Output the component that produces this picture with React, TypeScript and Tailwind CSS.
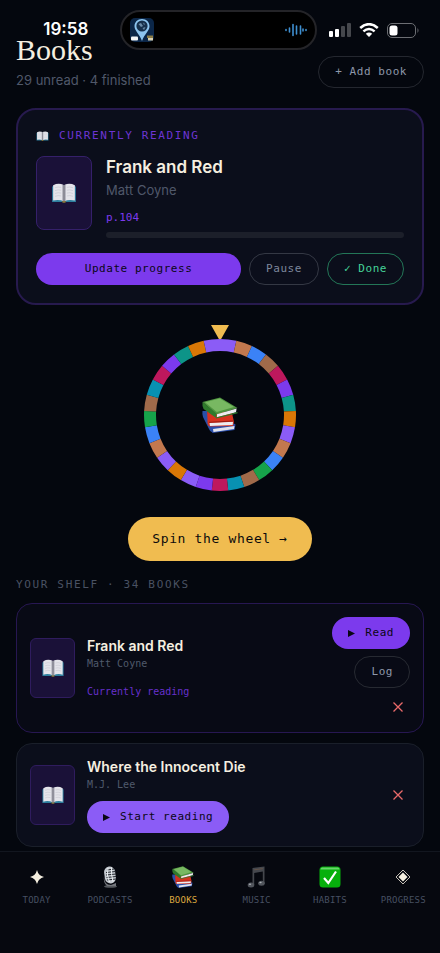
import React from "react";

const mono = "font-['DejaVu_Sans_Mono','Liberation_Mono',monospace]";

/* Open book drawing, used as the cover placeholder */
function OpenBook({ className }: { className: string }) {
  return (
    <svg viewBox="0 0 26 21" className={className} aria-hidden="true">
      <path d="M0.5 4 L2 3 L24 3 L25.5 4 V20 H15 Q13 21.5 11 20 H0.5 Z" fill="#2e7f9e" />
      <path d="M11 19 H15 L14.4 20.8 H11.6 Z" fill="#8a6a22" />
      <path d="M1.6 2.4 Q7 -0.4 12.6 2 V19 Q7 16.8 1.6 18.4 Z" fill="#e4e4ea" />
      <path d="M24.4 2.4 Q19 -0.4 13.4 2 V19 Q19 16.8 24.4 18.4 Z" fill="#e4e4ea" />
      <path d="M11.2 1.5 L13 2.4 L14.8 1.5 V18.4 L13 19.3 L11.2 18.4 Z" fill="#a9a9b4" />
      <path d="M13 2 V19" stroke="#55555f" strokeWidth="0.7" />
      <path
        d="M3.6 5 Q7 3.6 10 4.6 M3.6 8 Q7 6.6 10 7.6 M3.6 11 Q7 9.6 10 10.6 M3.6 14 Q7 12.6 10 13.6 M16 4.6 Q19 3.6 22.4 5 M16 7.6 Q19 6.6 22.4 8 M16 10.6 Q19 9.6 22.4 11 M16 13.6 Q19 12.6 22.4 14"
        fill="none"
        stroke="#c2c2cc"
        strokeWidth="0.6"
      />
    </svg>
  );
}

/* Stack of three books */
function BookStack({ className }: { className: string }) {
  return (
    <svg viewBox="0 0 36 36" className={className} aria-hidden="true">
      <path d="M0.5 14 L5 14 L10 30 L10.500 35.500 Q8 35 7 32 L1 20 Q0 17 0.500 14 Z" fill="#2a4fa8" />
      <path d="M8 29 L31 26 L33.500 27.500 L32.500 33 L10.500 36 Z" fill="#2b4eaa" />
      <path d="M11 32 L32.500 29 L32 32 L11.500 35 Z" fill="#dfe2ec" />
      <path d="M5 13 L30 16 L32 25 L31 29 L7.500 29.500 Q5 28 5.500 23 Z" fill="#d7321f" />
      <path d="M7.500 26 L31 24.800 L30.600 28 L8 29 Z" fill="#ececf0" />
      <path d="M7 25.300 L31.600 24" stroke="#8f1a12" strokeWidth="0.900" />
      <path d="M0.500 5 L18 0.500 L35.500 11 L14.500 17.500 Z" fill="#4f9440" />
      <path d="M3 5.200 L17.800 1.400 L32 10 L14.800 15 Z" fill="#78b862" />
      <path d="M0.500 5 L14.500 16.500 L14.200 21 L1.600 12 Q0 8.500 0.500 5 Z" fill="#2f7a2c" />
      <path d="M15 17.200 L34.600 11.400 L34 15.200 L15 20.200 Z" fill="#ececf0" />
      <path d="M14 21 L35.500 15.600" stroke="#2f7a2c" strokeWidth="1.200" />
    </svg>
  );
}

function Cover({ large = false }: { large?: boolean }) {
  return (
    <div
      className={
        large
          ? "flex h-[74px] w-14 shrink-0 items-center justify-center rounded-lg border border-[#35206a] bg-[#1a1138]"
          : "flex h-[60px] w-[45px] shrink-0 items-center justify-center rounded-md border border-[#2f1c5e] bg-[#1a1138]"
      }
    >
      <OpenBook className={large ? "h-5 w-[26px]" : "h-[18px] w-[22px]"} />
    </div>
  );
}

const segments = [
  "#8b5cf6", "#c2784e", "#3b82f6", "#a06a4a", "#be185d", "#7c3aed", "#0d9488", "#d97706",
  "#8b5cf6", "#c2784e", "#3b82f6", "#16a34a", "#a06a4a", "#0891b2", "#be185d", "#7c3aed",
  "#8b5cf6", "#d97706", "#8b5cf6", "#c2784e", "#3b82f6", "#16a34a", "#a06a4a", "#0891b2",
  "#be185d", "#7c3aed", "#0d9488", "#d97706", "#8b5cf6",
];

function Wheel() {
  const point = (r: number, i: number) => {
    const a = (i / segments.length) * Math.PI * 2;
    return `${76 + r * Math.sin(a)} ${76 - r * Math.cos(a)}`;
  };
  return (
    <div className="flex flex-col items-center">
      <svg viewBox="0 0 18 14" className="h-3.5 w-[18px]" aria-hidden="true">
        <path d="M0 0 H18 L9 16 Z" fill="#f0bc50" />
      </svg>
      <div className="grid size-[152px] place-items-center">
        <svg viewBox="0 0 152 152" className="col-start-1 row-start-1 size-full" aria-hidden="true">
          {segments.map((color, i) => (
            <path
              key={i}
              d={`M${point(76, i)} A76 76 0 0 1 ${point(76, i + 1)} L${point(64, i + 1)} A64 64 0 0 0 ${point(64, i)} Z`}
              fill={color}
            />
          ))}
        </svg>
        <BookStack className="col-start-1 row-start-1 size-9" />
      </div>
    </div>
  );
}

function StatusBar() {
  return (
    <div className="absolute inset-x-0 top-0 z-10 flex h-[60px] items-center pr-1">
      <div className="flex flex-1 justify-center pl-3 font-['Inter',sans-serif] text-[17px] font-semibold text-white">
        19:58
      </div>
      <div className="flex h-10 w-[197px] items-center justify-between rounded-full border-2 border-[#242428] bg-black pr-2 pl-2">
        <svg viewBox="0 0 24 24" className="size-6" aria-hidden="true">
          <rect width="24" height="24" rx="5" fill="#0b2647" />
          <path d="M12 1 C7.500 1 4.500 4.200 4.500 8.300 C4.500 13 9.500 16 12 23 C14.500 16 19.500 13 19.500 8.300 C19.500 4.200 16.500 1 12 1 Z" fill="#8cc4ee" />
          <circle cx="12" cy="8" r="5.600" fill="#16304c" />
          <path d="M8.500 6 L11 5 L13 8 L11 9 Z M13 4.500 L15 6 L14 7 Z M12.500 10 L15.500 9 L14 12 Z" fill="#6b8aa6" />
          <rect x="1" y="18.500" width="7" height="4" rx="1" fill="#f2f4f6" />
          <rect x="17" y="17.500" width="6" height="2.500" fill="#8c7c46" />
          <rect x="18" y="20" width="5" height="2.500" fill="#d8d0b0" />
        </svg>
        <svg viewBox="0 0 22 14" className="h-3.5 w-[22px]" aria-hidden="true">
          <path
            d="M1 6.500 V7.500 M4.500 5 V9 M8 1.500 V12.500 M11.500 3 V11 M15.500 3 V11 M18 6 V8 M21 6.500 V7.500"
            stroke="#3f8fd0"
            strokeWidth="1.600"
            strokeLinecap="round"
          />
        </svg>
      </div>
      <div className="flex flex-1 items-center gap-2 pl-3">
        <svg viewBox="0 0 22 14" className="h-3.5 w-[22px]" aria-hidden="true">
          <rect x="0" y="8" width="4" height="6" rx="1" fill="#fff" />
          <rect x="6" y="6" width="4" height="8" rx="1" fill="#fff" />
          <rect x="12" y="3" width="4" height="11" rx="1" fill="#45474c" />
          <rect x="18" y="0" width="4" height="14" rx="1" fill="#45474c" />
        </svg>
        <svg viewBox="0 0 20 14" className="h-3.5 w-5" aria-hidden="true">
          <path d="M1.200 5 Q10 -2.600 18.800 5" fill="none" stroke="#fff" strokeWidth="2.600" />
          <path d="M4.400 8.400 Q10 3.600 15.600 8.400" fill="none" stroke="#fff" strokeWidth="2.500" />
          <path d="M10 14 L6.800 10.800 Q10 8.200 13.200 10.800 Z" fill="#fff" />
        </svg>
        <svg viewBox="0 0 33 15" className="h-[15px] w-[33px]" aria-hidden="true">
          <rect x="0.500" y="0.500" width="28" height="14" rx="4.500" fill="none" stroke="#6c6e73" />
          <rect x="2.500" y="2.500" width="8" height="10" rx="2.500" fill="#fff" />
          <path d="M30.500 5 Q32.500 7.500 30.500 10 Z" fill="#6c6e73" />
        </svg>
      </div>
    </div>
  );
}

function PlayIcon() {
  return (
    <svg viewBox="0 0 7 7" className="size-[7px]" aria-hidden="true">
      <path d="M0 0 L7 3.500 L0 7 Z" fill="currentColor" />
    </svg>
  );
}

function RemoveButton({ label }: { label: string }) {
  return (
    <button type="button" aria-label={label} className="flex h-6 w-6 items-center justify-center text-[#ea6a6a]">
      <svg viewBox="0 0 10 10" className="size-2.5" aria-hidden="true">
        <path d="M0.500 0.500 L9.500 9.500 M9.500 0.500 L0.500 9.500" stroke="currentColor" strokeWidth="1.300" />
      </svg>
    </button>
  );
}

const pill = "flex h-8 items-center justify-center rounded-full text-[11px] tracking-wider whitespace-nowrap";

function SparkIcon() {
  return (
    <svg viewBox="0 0 22 22" className="size-[22px]" aria-hidden="true">
      <path d="M11 4 Q12.300 9.700 18 11 Q12.300 12.300 11 18 Q9.700 12.300 4 11 Q9.700 9.700 11 4 Z" fill="#f5efe0" />
    </svg>
  );
}

function MicIcon() {
  return (
    <svg viewBox="0 0 22 22" className="size-[22px]" aria-hidden="true">
      <ellipse cx="11.500" cy="20.500" rx="6.500" ry="1.300" fill="#55585e" />
      <path d="M5 10 Q5 19 12 19 L17 17 V20 H8 Q4 17 5 10 Z" fill="#73767c" />
      <rect x="5.500" y="0.500" width="11" height="17" rx="5.500" fill="#c6cbd1" transform="rotate(-8 11 9)" />
      <path d="M8 4 L15 3 M7 6.500 L16.500 5.500 M7 9 L17 8 M7.500 11.500 L17 10.500 M8 14 L17 13" stroke="#24282f" strokeWidth="1.200" />
      <path d="M9 2 Q7 9 10.500 16 M12.500 1.500 Q12 9 14 15.500" stroke="#eef2f5" strokeWidth="1" fill="none" />
    </svg>
  );
}

function MusicIcon() {
  return (
    <svg viewBox="0 0 22 22" className="size-[22px]" aria-hidden="true">
      <path d="M6.500 2 L18.500 0.500 V17 H16.800 V5.500 L8.200 7 V19 H6.500 Z" fill="#44474d" />
      <path d="M8.200 3.800 L16.800 2.600" stroke="#6a5648" strokeWidth="0.800" />
      <ellipse cx="5" cy="19" rx="3.300" ry="2.500" fill="#51555c" />
      <ellipse cx="15.500" cy="17.200" rx="3.300" ry="2.500" fill="#51555c" />
      <ellipse cx="4" cy="18.300" rx="1.200" ry="0.800" fill="#a9adb3" />
      <ellipse cx="14.500" cy="16.500" rx="1.200" ry="0.800" fill="#a9adb3" />
    </svg>
  );
}

function CheckIcon() {
  return (
    <svg viewBox="0 0 22 22" className="size-[22px]" aria-hidden="true">
      <rect x="0.500" y="0.500" width="21" height="21" rx="3.500" fill="#06b00c" />
      <path d="M3 1.500 H19 Q20.500 2 20.500 3.500 H1.500 Q1.500 2 3 1.500 Z" fill="#67d66a" />
      <path d="M5 12 L9.300 17 L17 5.500" fill="none" stroke="#fff" strokeWidth="2.200" />
    </svg>
  );
}

function DiamondIcon() {
  return (
    <svg viewBox="0 0 22 22" className="size-[22px]" aria-hidden="true">
      <path d="M11 4 L18 11 L11 18 L4 11 Z" fill="none" stroke="#d9d4c8" strokeWidth="0.900" />
      <path d="M11 6.500 L15.500 11 L11 15.500 L6.500 11 Z" fill="#f5efe0" />
    </svg>
  );
}

const tabs = [
  { label: "TODAY", icon: <SparkIcon /> },
  { label: "PODCASTS", icon: <MicIcon /> },
  { label: "BOOKS", icon: <BookStack className="size-[22px]" />, active: true },
  { label: "MUSIC", icon: <MusicIcon /> },
  { label: "HABITS", icon: <CheckIcon /> },
  { label: "PROGRESS", icon: <DiamondIcon /> },
];

export default function App() {
  return (
    <div className="relative flex min-h-screen flex-col bg-[#04070e] font-['Inter',sans-serif] text-[#f5efe0]">
      <StatusBar />
      <main className="flex flex-1 flex-col px-4 pt-8 pb-1">
        <header className="flex items-end justify-between">
          <div>
            <h1 className="font-['Liberation_Serif',serif] text-[30px] leading-9">Books</h1>
            <p className="mt-0.5 mb-0.5 text-[13px] leading-5 text-[#50586a]">29 unread · 4 finished</p>
          </div>
          <button type="button" className={`${pill} ${mono} mb-1 border border-[#24272f] px-4 text-[#8e98ab]`}>
            + Add book
          </button>
        </header>

        <section className="mt-4 rounded-[20px] border-2 border-[#271a4e] bg-[#0b0e1b] p-[18px]">
          <h2 className={`${mono} flex items-center gap-2.5 text-[11px] leading-4 tracking-[0.15em] text-[#6d35d3]`}>
            <OpenBook className="h-2.5 w-[13px]" />
            CURRENTLY READING
          </h2>
          <div className="mt-3 flex gap-3.5">
            <Cover large />
            <div className="flex min-w-0 flex-1 flex-col">
              <h3 className="text-[17px] leading-[22px] font-semibold">Frank and Red</h3>
              <p className="mt-0.5 text-[13px] leading-5 text-[#50586a]">Matt Coyne</p>
              <p className={`${mono} mt-2.5 text-[11px] leading-4 text-[#7c3aed]`}>p.104</p>
              <div className="mt-1.5 h-1.5 rounded-full bg-[#1c1f2a]" />
            </div>
          </div>
          <div className="mt-[15px] flex gap-2">
            <button type="button" className={`${pill} ${mono} flex-1 bg-[#7c3aed] text-[#0a0714]`}>
              Update progress
            </button>
            <button type="button" className={`${pill} ${mono} border border-[#343844] px-4 text-[#7d879b]`}>
              Pause
            </button>
            <button type="button" className={`${pill} ${mono} border border-[#237657] px-4 text-[#45d399]`}>
              ✓ Done
            </button>
          </div>
        </section>

        <section className="mt-5 flex flex-col items-center">
          <Wheel />
          <button
            type="button"
            className={`${mono} mt-[26px] flex h-11 items-center rounded-full bg-[#f0bc50] px-6 text-[13px] tracking-wider whitespace-nowrap text-[#0c0b0c]`}
          >
            Spin the wheel →
          </button>
        </section>

        <h2 className={`${mono} mt-4 text-[11px] leading-4 tracking-[0.15em] text-[#4a5263]`}>
          YOUR SHELF · 34 BOOKS
        </h2>

        <ul className="mt-2.5 flex flex-col gap-2.5">
          <li className="flex items-center gap-3 rounded-2xl border border-[#271752] bg-[#080a15] p-[13px]">
            <Cover />
            <div className="min-w-0 flex-1">
              <h3 className="text-[14px] leading-5 font-semibold">Frank and Red</h3>
              <p className={`${mono} text-[10px] leading-4 text-[#505a6c]`}>Matt Coyne</p>
              <p className={`${mono} mt-3 text-[10px] leading-4 text-[#6730cc]`}>Currently reading</p>
            </div>
            <div className="flex flex-col items-end gap-[7px]">
              <button type="button" className={`${pill} ${mono} gap-2.5 bg-[#7c3aed] px-4 text-[#0a0714]`}>
                <PlayIcon />
                Read
              </button>
              <button type="button" className={`${pill} ${mono} border border-[#272a32] px-4 text-[#8e98ab]`}>
                Log
              </button>
              <RemoveButton label="Remove Frank and Red" />
            </div>
          </li>
          <li className="flex items-center gap-3 rounded-2xl border border-[#1a1f2a] bg-[#0b0e1b] p-[13px]">
            <Cover />
            <div className="min-w-0 flex-1">
              <h3 className="text-[14px] leading-5 font-semibold">Where the Innocent Die</h3>
              <p className={`${mono} text-[10px] leading-4 text-[#505a6c]`}>M.J. Lee</p>
              <button type="button" className={`${pill} ${mono} mt-2 gap-2.5 bg-[#8b5cf6] px-4 text-[#0a0714]`}>
                <PlayIcon />
                Start reading
              </button>
            </div>
            <RemoveButton label="Remove Where the Innocent Die" />
          </li>
        </ul>
      </main>

      <nav className="grid grid-cols-6 border-t border-[#12161f] bg-[#06080f] pt-3.5 pb-[45px]">
        {tabs.map((tab) => (
          <a
            key={tab.label}
            href="#"
            aria-current={tab.active ? "page" : undefined}
            className={`${mono} flex flex-col items-center gap-1 text-[9px] leading-4 tracking-wide ${
              tab.active ? "text-[#dca93f]" : "text-[#465062]"
            }`}
          >
            {tab.icon}
            {tab.label}
          </a>
        ))}
      </nav>
    </div>
  );
}
